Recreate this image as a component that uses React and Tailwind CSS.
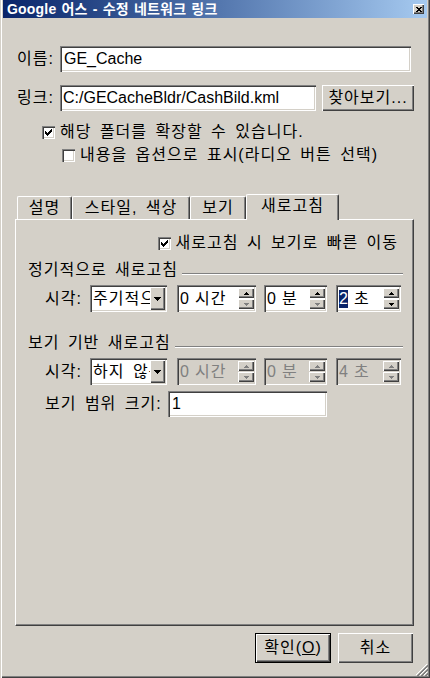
import React from "react";

// classic win2k bevels
const sunken =
  "shadow-[inset_1px_1px_0_#808080,inset_2px_2px_0_#404040,inset_-1px_-1px_0_#ffffff,inset_-2px_-2px_0_#d4d0c8]";
const raised =
  "shadow-[inset_1px_1px_0_#ffffff,inset_-1px_-1px_0_#404040,inset_-2px_-2px_0_#808080]";

function CheckBox({ checked }) {
  return (
    <span className={`w-[13px] h-[13px] shrink-0 bg-white flex items-center justify-center ${sunken}`}>
      {checked && (
        <svg width="7" height="7" viewBox="0 0 7 7" shapeRendering="crispEdges">
          <path
            d="M6 0h1v1h-1z M5 1h2v1h-2z M0 2h1v1h-1z M4 2h3v1h-3z M0 3h2v1h-2z M3 3h3v1h-3z M0 4h5v1h-5z M1 5h3v1h-3z M2 6h1v1h-1z"
            fill="#000"
          />
        </svg>
      )}
    </span>
  );
}

function Arrow({ up, on }) {
  return (
    <svg width="5" height="3" viewBox="0 0 5 3" shapeRendering="crispEdges">
      <path
        d={up ? "M2 0h1v1h1v1h1v1h-5v-1h1v-1h1z" : "M0 0h5v1h-1v1h-1v1h-1v-1h-1v-1h-1z"}
        fill={on ? "#000" : "#808080"}
      />
    </svg>
  );
}

function Spin({ className, value, unit, selected, disabled, canDown }) {
  return (
    <div
      className={`${className} h-[27px] p-[2px] flex ${sunken} ${
        disabled ? "bg-[#d4d0c8] text-[#808080]" : "bg-white text-black"
      }`}
    >
      <div className="flex-1 flex items-center pl-[1px] whitespace-nowrap overflow-hidden">
        <span className={`text-[16px] tracking-normal leading-[18px] ${selected ? "bg-[#0a246a] text-white" : ""}`}>
          {value}
        </span>
        <span className="ml-[6px]">{unit}</span>
      </div>
      <div className="w-[16px] flex flex-col gap-[1px] py-[1px]">
        <div className={`flex-1 bg-[#d4d0c8] flex items-center justify-center ${raised}`}>
          <Arrow up on={!disabled} />
        </div>
        <div className={`flex-1 bg-[#d4d0c8] flex items-center justify-center ${raised}`}>
          <Arrow on={!disabled && canDown} />
        </div>
      </div>
    </div>
  );
}

function Select({ text }) {
  return (
    <div className={`w-[77px] h-[27px] p-[2px] flex bg-white ${sunken}`}>
      <div className="flex-1 flex items-center pl-[1px] whitespace-nowrap overflow-hidden">{text}</div>
      <div className={`w-[15px] bg-[#d4d0c8] flex items-center justify-center ${raised}`}>
        <svg width="7" height="4" viewBox="0 0 7 4" shapeRendering="crispEdges">
          <path d="M0 0h7v1h-1v1h-1v1h-1v1h-1v-1h-1v-1h-1v-1h-1z" fill="#000" />
        </svg>
      </div>
    </div>
  );
}

function GroupTitle({ children }) {
  return (
    <div className="h-[20px] flex items-center pl-[12px] pr-[10px]">
      <span className="whitespace-nowrap">{children}</span>
      <div className="flex-1 ml-[4px] mt-[7px] h-[2px] border-t border-[#808080] bg-white" />
    </div>
  );
}

function Tab({ label, className, active }) {
  return (
    <div
      className={`${className} flex items-center justify-center bg-[#d4d0c8] border-t border-l border-white border-r border-r-[#404040] rounded-t-[2px] shadow-[inset_-1px_0_0_#808080] ${
        active ? "h-[26px] -mb-px relative z-10 pb-[3px]" : "h-[23px]"
      }`}
    >
      {label}
    </div>
  );
}

export default function App() {
  return (
    <div className="w-[430px] h-[678px] bg-[#d4d0c8] relative flex flex-col text-black text-[16px] tracking-[1px] [word-spacing:3px] leading-[18px] font-['Liberation_Sans','Noto_Sans_CJK_KR',sans-serif] shadow-[inset_1px_0_0_#d4d0c8,inset_2px_0_0_#ffffff,inset_-1px_-1px_0_#404040,inset_-2px_-2px_0_#808080]">
      {/* title bar */}
      <div className="mx-[3px] h-[18px] shrink-0 flex items-center bg-linear-to-r from-[#0a246a] to-[#a6caf0]">
        <span className="ml-[4px] text-white font-bold text-[14px] tracking-[0.2px] [word-spacing:1px]">
          Google 어스 - 수정 네트워크 링크
        </span>
        <div className={`ml-auto mr-[3px] w-[11px] h-[10px] bg-[#d4d0c8] flex items-center justify-center ${raised}`}>
          <svg width="6" height="5" viewBox="0 0 6 5" shapeRendering="crispEdges">
            <path d="M0 0h2v1h2v-1h2v1h-1v1h-1v1h1v1h1v1h-2v-1h-2v1h-2v-1h1v-1h1v-1h-1v-1h-1z" fill="#000" />
          </svg>
        </div>
      </div>

      {/* name */}
      <div className="mt-[28px] flex items-center">
        <span className="ml-[17px] w-[43px]">이름:</span>
        <div className={`w-[351px] h-[26px] bg-white flex items-center pl-[4px] tracking-normal ${sunken}`}>
          GE_Cache
        </div>
      </div>

      {/* link */}
      <div className="mt-[13px] flex items-center">
        <span className="ml-[17px] w-[43px]">링크:</span>
        <div className={`w-[256px] h-[26px] bg-white flex items-center pl-[3px] tracking-normal ${sunken}`}>
          C:/GECacheBldr/CashBild.kml
        </div>
        <div className={`ml-[6px] w-[92px] h-[26px] flex items-center justify-center ${raised}`}>찾아보기...</div>
      </div>

      {/* checkboxes */}
      <div className="mt-[11px] h-[20px] flex items-center pl-[42px] gap-[5px]">
        <CheckBox checked />
        <span>해당 폴더를 확장할 수 있습니다.</span>
      </div>
      <div className="mt-[3px] h-[20px] flex items-center pl-[62px] gap-[5px]">
        <CheckBox />
        <span>내용을 옵션으로 표시(라디오 버튼 선택)</span>
      </div>

      {/* tabs */}
      <div className="mt-[29px] h-[25px] flex items-end pl-[17px]">
        <Tab label="설명" className="w-[55px]" />
        <Tab label="스타일, 색상" className="w-[118px]" />
        <Tab label="보기" className="w-[56px]" />
        <Tab label="새로고침" className="w-[93px]" active />
      </div>

      {/* panel */}
      <div className="ml-[15px] w-[399px] h-[407px] flex flex-col border-t border-l border-white border-r border-b border-r-[#404040] border-b-[#404040] shadow-[inset_-1px_-1px_0_#808080]">
        <div className="mt-[13px] h-[20px] flex items-center justify-end pr-[15px] gap-[5px]">
          <CheckBox checked />
          <span>새로고침 시 보기로 빠른 이동</span>
        </div>

        <div className="mt-[7px]">
          <GroupTitle>정기적으로 새로고침</GroupTitle>
        </div>
        <div className="mt-[5px] flex items-center pl-[29px]">
          <span className="w-[45px]">시각:</span>
          <Select text="주기적으로" />
          <Spin className="ml-[10px] w-[79px]" value="0" unit="시간" />
          <Spin className="ml-[8px] w-[63px]" value="0" unit="분" />
          <Spin className="ml-[9px] w-[65px]" value="2" unit="초" selected canDown />
        </div>

        <div className="mt-[21px]">
          <GroupTitle>보기 기반 새로고침</GroupTitle>
        </div>
        <div className="mt-[5px] flex items-center pl-[29px]">
          <span className="w-[45px]">시각:</span>
          <Select text="하지 않음" />
          <Spin className="ml-[10px] w-[79px]" value="0" unit="시간" disabled />
          <Spin className="ml-[8px] w-[63px]" value="0" unit="분" disabled />
          <Spin className="ml-[9px] w-[65px]" value="4" unit="초" disabled />
        </div>
        <div className="mt-[6px] flex items-center pl-[29px]">
          <span className="w-[123px] whitespace-nowrap">보기 범위 크기:</span>
          <div className={`w-[159px] h-[26px] bg-white flex items-center pl-[4px] tracking-normal ${sunken}`}>
            1
          </div>
        </div>
      </div>

      {/* buttons */}
      <div className="mt-[7px] flex justify-end pr-[17px] gap-[7px]">
        <div className={`w-[76px] h-[30px] flex items-center justify-center border border-black ${raised}`}>
          확인(<span className="underline">O</span>)
        </div>
        <div className={`w-[75px] h-[30px] flex items-center justify-center ${raised}`}>취소</div>
      </div>

      {/* size grip */}
      <svg className="absolute right-[2px] bottom-[2px]" width="12" height="12" viewBox="0 0 12 12">
        <path d="M11 0L0 11M11 4L4 11M11 8L8 11" stroke="#ffffff" strokeWidth="1" />
        <path d="M12 1L1 12M12 2L2 12M12 5L5 12M12 6L6 12M12 9L9 12M12 10L10 12" stroke="#808080" strokeWidth="1" />
      </svg>
    </div>
  );
}
